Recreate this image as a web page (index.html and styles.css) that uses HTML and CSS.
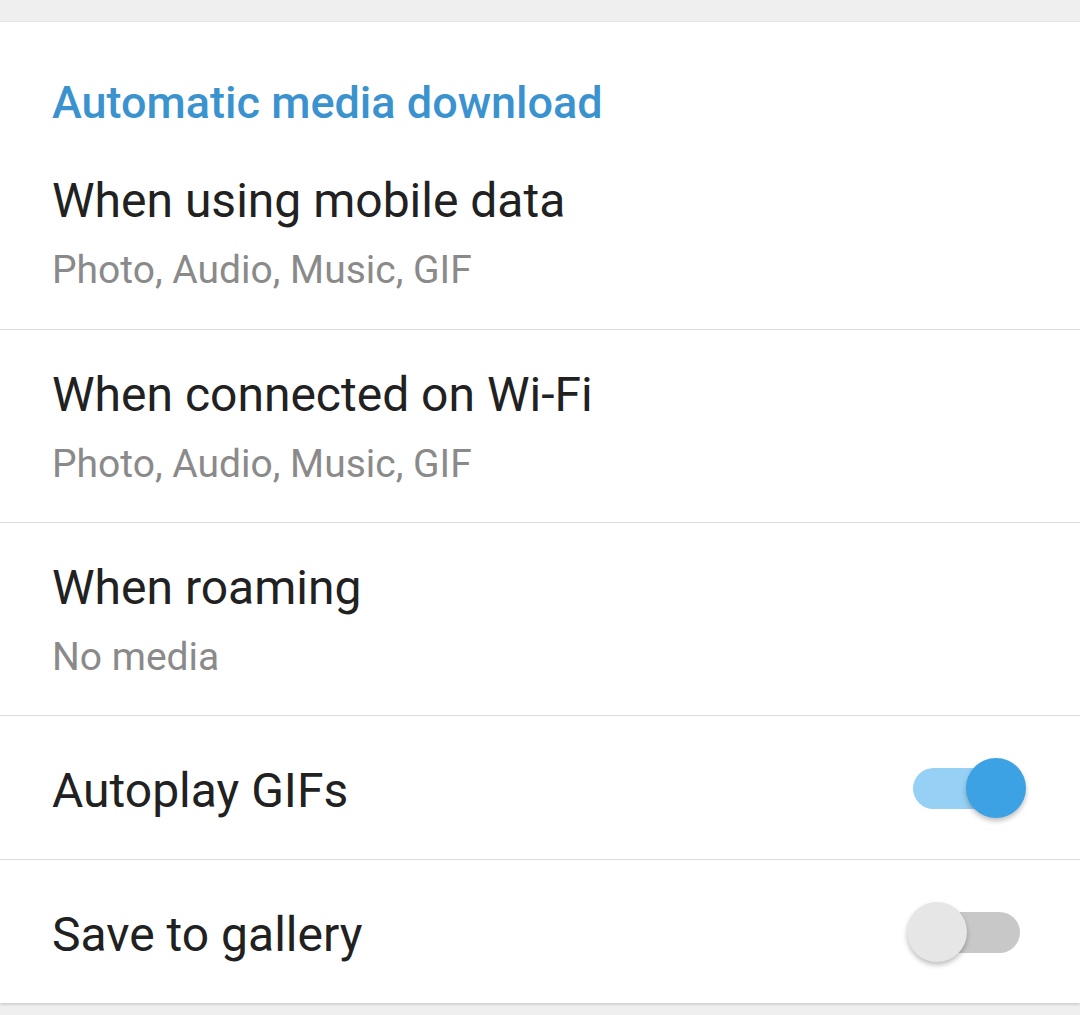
FILE: index.html
```html
<!DOCTYPE html>
<html lang="en">

<head>
    <meta charset="UTF-8">
    <meta name="viewport" content="width=device-width, initial-scale=1.0">
    <title>Data and Storage</title>
    <link rel="stylesheet" href="styles.css">
</head>

<body>
    <div class="topbar"></div>

    <div class="card">
        <h2 class="section-title">Automatic media download</h2>

        <!-- Download rules -->
        <div class="item first">
            <div class="item-title">When using mobile data</div>
            <div class="item-sub">Photo, Audio, Music, GIF</div>
        </div>
        <div class="item">
            <div class="item-title">When connected on Wi-Fi</div>
            <div class="item-sub">Photo, Audio, Music, GIF</div>
        </div>
        <div class="item">
            <div class="item-title">When roaming</div>
            <div class="item-sub">No media</div>
        </div>

        <!-- Toggles -->
        <div class="item switch-row">
            <div class="item-title label">Autoplay GIFs</div>
            <div class="switch on">
                <span class="track"></span>
                <span class="thumb"></span>
            </div>
        </div>
        <div class="item switch-row">
            <div class="item-title label">Save to gallery</div>
            <div class="switch">
                <span class="track"></span>
                <span class="thumb"></span>
            </div>
        </div>
    </div>
</body>

</html>
```

FILE: styles.css
```css
/* Reset */

* {
    margin: 0;
    padding: 0;
    box-sizing: border-box;
}

body {
    font-family: Roboto, 'Noto Sans', sans-serif;
    background-color: #efefef;
    color: #212121;
    min-height: 100vh;
}

/* Top strip */

.topbar {
    height: 22px;
    background-color: #efefef;
    border-bottom: 1px solid #e3e3e3;
}

/* Settings card */

.card {
    background-color: #ffffff;
    padding-top: 55px;
    box-shadow: 0 2px 2px rgba(0, 0, 0, 0.12);
}

.section-title {
    padding: 0 52px;
    font-size: 45px;
    line-height: 52px;
    font-weight: 500;
    color: #3a93cf;
}

/* List items */

.item {
    padding: 37px 52px 35px;
    border-top: 1px solid #dcdcdc;
}

.item.first {
    border-top: none;
    padding-top: 44px;
    padding-bottom: 36px;
}

.item-title {
    font-size: 48px;
    line-height: 56px;
    color: #212121;
}

.item-sub {
    margin-top: 18px;
    font-size: 39px;
    line-height: 46px;
    color: #8a8a8a;
}

/* Rows with a switch */

.switch-row {
    display: flex;
    align-items: center;
    justify-content: space-between;
    height: 144px;
    padding: 0 54px 0 52px;
}

.label {
    padding-top: 6px;
}

.switch {
    position: relative;
    width: 119px;
    height: 60px;
}

.switch .track {
    position: absolute;
    left: 6px;
    top: 10px;
    width: 107px;
    height: 41px;
    border-radius: 21px;
    background-color: #c8c8c8;
}

.switch .thumb {
    position: absolute;
    left: 0;
    top: 0;
    width: 60px;
    height: 60px;
    border-radius: 50%;
    background-color: #e6e6e6;
    box-shadow: 0 3px 5px rgba(0, 0, 0, 0.25);
}

.switch.on .track {
    background-color: #96d1f5;
}

.switch.on .thumb {
    left: 59px;
    background-color: #3ca2e3;
}
```
